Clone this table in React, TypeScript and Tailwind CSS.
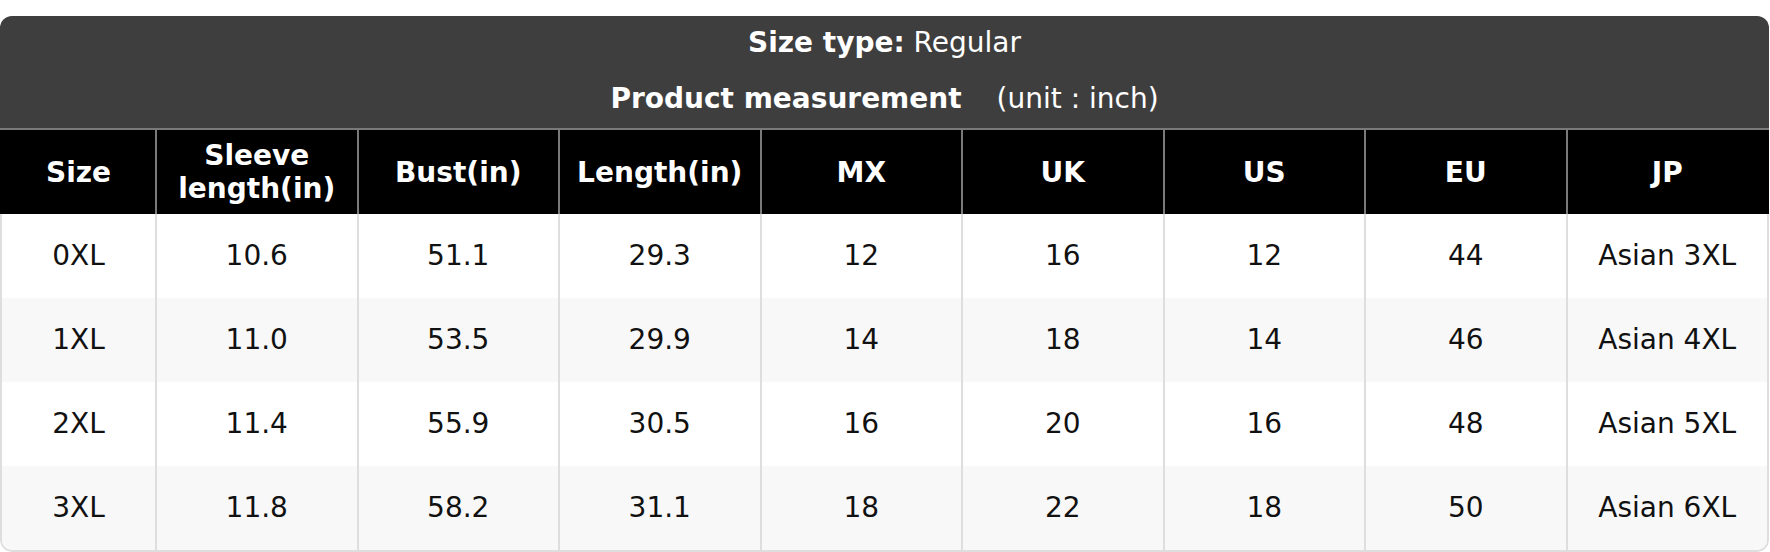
import React from "react";

const headers = ["Size", "Sleeve length(in)", "Bust(in)", "Length(in)", "MX", "UK", "US", "EU", "JP"];
const rows = [
  ["0XL", "10.6", "51.1", "29.3", "12", "16", "12", "44", "Asian 3XL"],
  ["1XL", "11.0", "53.5", "29.9", "14", "18", "14", "46", "Asian 4XL"],
  ["2XL", "11.4", "55.9", "30.5", "16", "20", "16", "48", "Asian 5XL"],
  ["3XL", "11.8", "58.2", "31.1", "18", "22", "18", "50", "Asian 6XL"],
];

export default function App() {
  return (
    <div className="w-[1770px] h-[552px] bg-white pt-4" style={{ fontFamily: '"DejaVu Sans", Verdana, sans-serif' }}>
      <div className="w-[1769px] rounded-[12px] overflow-hidden">
        <div className="bg-[#3e3e3e] text-white text-[28px] flex flex-col items-center pt-[2px] pb-[4px]">
          <div className="h-[50px] flex items-center leading-none">
            <span className="font-bold">Size type:</span>
            <span>&nbsp;Regular</span>
          </div>
          <div className="mt-[6px] h-[50px] flex items-center leading-none">
            <span className="font-bold">Product measurement</span>
            <span className="ml-[35px]">(unit : inch)</span>
          </div>
        </div>
        <div className="bg-black border-t-2 border-[#7a7a7a] px-[2px]">
          <div className="grid grid-cols-[153px_repeat(8,1fr)]">
            {headers.map((h, i) => (
              <div
                key={h}
                className={`h-[84px] flex items-center justify-center text-center px-2 text-white font-bold text-[28px] leading-[33px] ${i > 0 ? "border-l-2 border-[#7a7a7a]" : ""}`}
              >
                {h}
              </div>
            ))}
          </div>
        </div>
        <div className="border-x-2 border-b-2 border-[#dedede] rounded-b-[12px] overflow-hidden">
          {rows.map((r, ri) => (
            <div
              key={ri}
              className={`grid grid-cols-[153px_repeat(8,1fr)] ${ri % 2 === 1 ? "bg-[#f8f8f8]" : "bg-white"}`}
            >
              {r.map((c, ci) => (
                <div
                  key={ci}
                  className={`h-[84px] flex items-center justify-center text-[28px] text-[#111] ${ci > 0 ? "border-l-2 border-[#dedede]" : ""}`}
                >
                  {c}
                </div>
              ))}
            </div>
          ))}
        </div>
      </div>
    </div>
  );
}
